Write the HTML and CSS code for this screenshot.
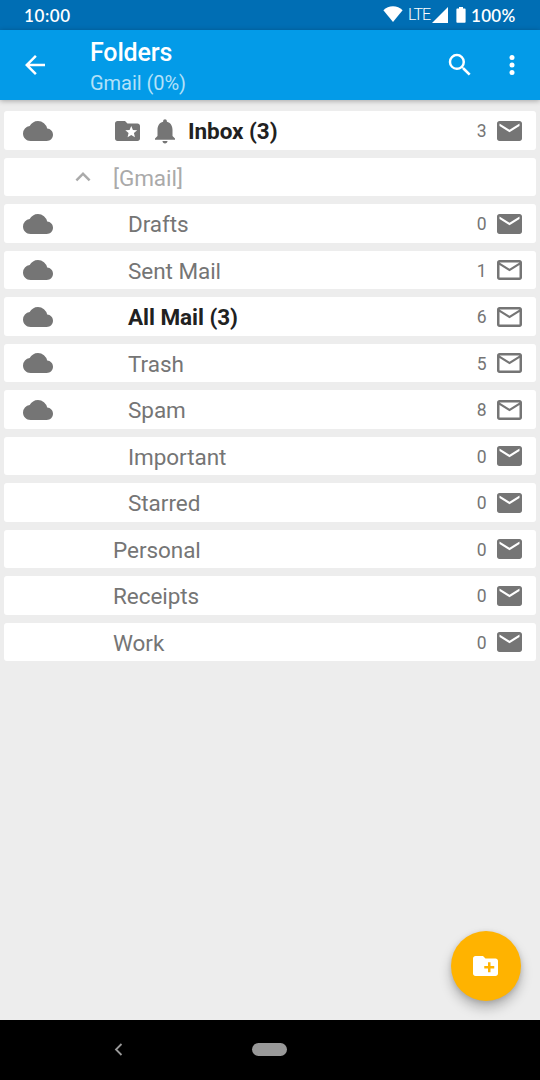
FILE: index.html
```html
<!DOCTYPE html>
<html lang="en">
<head>
<meta charset="utf-8">
<title>Folders</title>
<link rel="stylesheet" href="styles.css">
</head>
<body>
<svg class="defs" width="0" height="0">
  <symbol id="cloud" viewBox="0 0 24 24"><path d="M19.35 10.04A7.49 7.49 0 0 0 12 4C9.11 4 6.6 5.64 5.35 8.04A5.994 5.994 0 0 0 0 14c0 3.31 2.69 6 6 6h13c2.76 0 5-2.24 5-5 0-2.64-2.05-4.78-4.65-4.96z"/></symbol>
  <symbol id="mail" viewBox="0.4 0 24 24"><path d="M20 4H4c-1.100 0-1.990.9-1.990 2L2 18c0 1.100.9 2 2 2h16c1.100 0 2-.9 2-2V6c0-1.100-.9-2-2-2zm0 4l-8 5-8-5V6l8 5 8-5v2z"/></symbol>
  <symbol id="mail-outline" viewBox="0.4 0 24 24"><path d="M20 4H4c-1.100 0-1.990.9-1.990 2L2 18c0 1.100.9 2 2 2h16c1.100 0 2-.9 2-2V6c0-1.100-.9-2-2-2zm0 14H4V8l8 5 8-5v10zm-8-7L4 6h16l-8 5z"/></symbol>
</svg>
<div class="screen">
  <div class="status">
    <span class="clock">10:00</span>
    <svg class="wifi" viewBox="0 0 20 16"><path d="M10 16L.4 4.200C3 1.600 6.300.2 10 .2s7 1.400 9.600 4z"/></svg>
    <span class="lte">LTE</span>
    <svg class="signal" viewBox="0 0 16 16"><path d="M0 16L16 0v16z"/></svg>
    <svg class="battery" viewBox="0 0 10 16"><path d="M3 0h4v1.600h1.800q.8 0 .8.8v12.600q0 .8-.8.8H1.200q-.8 0-.8-.8V2.400q0-.8.8-.8H3z"/></svg>
    <span class="level">100%</span>
  </div>
  <header class="bar">
    <svg class="icon back" viewBox="0 0 24 24"><path d="M20 11H7.830l5.590-5.590L12 4l-8 8 8 8 1.410-1.410L7.830 13H20v-2z"/></svg>
    <div class="titles">
      <h1>Folders</h1>
      <p>Gmail (0%)</p>
    </div>
    <svg class="icon search" viewBox="0 0 24 24"><path d="M15.500 14h-.79l-.28-.27A6.471 6.471 0 0 0 16 9.500 6.500 6.500 0 1 0 9.500 16c1.610 0 3.090-.59 4.230-1.570l.27.28v.79l5 4.990L20.490 19l-4.990-5zm-6 0C7.010 14 5 11.990 5 9.500S7.010 5 9.500 5 14 7.010 14 9.500 11.990 14 9.500 14z"/></svg>
    <svg class="icon more" viewBox="0 0 24 24"><circle cx="12" cy="6" r="2"/><circle cx="12" cy="12" r="2"/><circle cx="12" cy="18" r="2"/></svg>
  </header>
  <main class="list">
    <div class="row unread">
      <span class="sync"><svg class="icon"><use href="#cloud"/></svg></span>
      <svg class="icon special" viewBox="0.4 0 24 24"><path d="M20 6h-8l-2-2H4c-1.100 0-2 .9-2 2v12c0 1.100.9 2 2 2h16c1.100 0 2-.9 2-2V8c0-1.100-.9-2-2-2zm-2.060 11L15 15.280 12.060 17l.78-3.330-2.590-2.240 3.410-.29L15 8l1.340 3.140 3.410.29-2.590 2.240.78 3.330z"/></svg>
      <svg class="icon bell" viewBox="0 0 24 24"><path d="M12 22c1.100 0 2-.9 2-2h-4c0 1.100.89 2 2 2zm6-6v-5c0-3.070-1.640-5.640-4.500-6.320V4c0-.83-.67-1.500-1.500-1.500s-1.500.67-1.500 1.500v.68C7.630 5.360 6 7.920 6 11v5l-2 2v1h16v-1l-2-2z"/></svg>
      <span class="name">Inbox (3)</span><span class="count">3</span><svg class="icon"><use href="#mail"/></svg>
    </div>
    <div class="row parent">
      <span class="sync"><svg class="icon chevron" viewBox="0 0 24 24"><path d="M12 8l-6 6 1.410 1.410L12 10.830l4.590 4.580L18 14z"/></svg></span>
      <span class="name">[Gmail]</span>
    </div>
    <div class="row child"><span class="sync"><svg class="icon"><use href="#cloud"/></svg></span><span class="name">Drafts</span><span class="count">0</span><svg class="icon"><use href="#mail"/></svg></div>
    <div class="row child"><span class="sync"><svg class="icon"><use href="#cloud"/></svg></span><span class="name">Sent Mail</span><span class="count">1</span><svg class="icon"><use href="#mail-outline"/></svg></div>
    <div class="row child unread"><span class="sync"><svg class="icon"><use href="#cloud"/></svg></span><span class="name">All Mail (3)</span><span class="count">6</span><svg class="icon"><use href="#mail-outline"/></svg></div>
    <div class="row child"><span class="sync"><svg class="icon"><use href="#cloud"/></svg></span><span class="name">Trash</span><span class="count">5</span><svg class="icon"><use href="#mail-outline"/></svg></div>
    <div class="row child"><span class="sync"><svg class="icon"><use href="#cloud"/></svg></span><span class="name">Spam</span><span class="count">8</span><svg class="icon"><use href="#mail-outline"/></svg></div>
    <div class="row child"><span class="sync"></span><span class="name">Important</span><span class="count">0</span><svg class="icon"><use href="#mail"/></svg></div>
    <div class="row child"><span class="sync"></span><span class="name">Starred</span><span class="count">0</span><svg class="icon"><use href="#mail"/></svg></div>
    <div class="row"><span class="sync"></span><span class="name">Personal</span><span class="count">0</span><svg class="icon"><use href="#mail"/></svg></div>
    <div class="row"><span class="sync"></span><span class="name">Receipts</span><span class="count">0</span><svg class="icon"><use href="#mail"/></svg></div>
    <div class="row"><span class="sync"></span><span class="name">Work</span><span class="count">0</span><svg class="icon"><use href="#mail"/></svg></div>
  </main>
  <div class="fab"><svg class="icon" viewBox="0.4 0 24 24"><path d="M20 6h-8l-2-2H4c-1.110 0-1.990.89-1.990 2L2 18c0 1.110.89 2 2 2h16c1.110 0 2-.89 2-2V8c0-1.110-.89-2-2-2zm-1 8h-3v3h-2v-3h-3v-2h3V9h2v3h3v2z"/></svg></div>
  <nav class="nav">
    <svg class="nav-back" viewBox="0 0 9 13"><path d="M7.500 1L2 6.500 7.500 12"/></svg>
    <span class="pill"></span>
  </nav>
</div>
</body>
</html>
```
FILE: styles.css
```css
* { box-sizing: border-box; }
body { margin: 0; font-family: Roboto, sans-serif; }
.defs { position: absolute; }
.screen {
  position: relative;
  display: flex;
  flex-direction: column;
  width: 540px;
  height: 1080px;
  background: #ededed;
  overflow: hidden;
}
svg { display: block; flex: none; fill: currentColor; }
.icon { width: 30px; height: 30px; }

.status {
  display: flex;
  align-items: center;
  height: 30px;
  padding: 0 24px;
  background: #006eb4;
  color: #fff;
  font: 600 17px/30px Lato, sans-serif;
  letter-spacing: 0.3px;
}
.clock { flex: 1; padding-top: 1px; letter-spacing: 0.6px; }
.wifi { width: 20px; height: 16px; margin: -2px 5px 0 0; }
.lte { width: 24px; font: 300 16px/30px Roboto, sans-serif; letter-spacing: -0.9px; }
.signal { width: 16px; height: 16px; margin-top: -1px; }
.battery { width: 10px; height: 16px; margin: 0 5px 0 8px; }
.level { width: 45px; padding-top: 1px; }

.bar {
  z-index: 1;
  display: flex;
  align-items: center;
  height: 70px;
  padding: 0 13px 0 20px;
  background: #039be8;
  color: #fff;
  box-shadow: 0 1px 5px rgba(0, 0, 0, 0.3);
}
.titles { flex: 1; padding: 6px 0 0 40px; }
h1 { margin: 0; font-size: 25px; font-weight: 500; line-height: 30px; letter-spacing: -0.15px; }
p { margin: 0; font-size: 20px; line-height: 30px; color: #b3e1f8; letter-spacing: -0.05px; }
.search { margin: -1px 22.5px 0 0; }

.list {
  flex: 1;
  display: flex;
  flex-direction: column;
  gap: 8px;
  padding: 11.250px 4px 0;
}
.row {
  display: flex;
  align-items: center;
  height: 38.5px;
  padding: 0 11px 0 19px;
  border-radius: 3px;
  background: #fff;
  color: #757575;
}
.sync { width: 90px; flex: none; }
.special { margin-right: 7px; }
.bell { margin-right: 8px; }
.chevron { margin-left: 44.5px; }
.name { flex: 1; padding-top: 1.2px; font-size: 22.5px; line-height: 38px; letter-spacing: -0.05px; }
.child .name { padding-left: 15px; }
.unread .name { font-weight: 700; color: #212121; }
.parent { color: #aaa; }
.count { margin-right: 8.5px; padding-top: 1px; font-size: 17.5px; }

.fab {
  position: absolute;
  left: 451px;
  top: 931px;
  display: flex;
  align-items: center;
  justify-content: center;
  width: 70px;
  height: 70px;
  border-radius: 50%;
  background: #ffb300;
  color: #fff;
  box-shadow: 0 7px 12px rgba(0, 0, 0, 0.25), 0 1px 5px rgba(0, 0, 0, 0.12);
}
.nav {
  display: flex;
  align-items: center;
  height: 60px;
  padding: 0 0 1px 114px;
  background: #000;
}
.nav-back { width: 9px; height: 13px; fill: none; stroke: #999; stroke-width: 1.8; }
.pill { width: 35px; height: 13px; margin-left: 129px; border-radius: 7px; background: #999; }
```
